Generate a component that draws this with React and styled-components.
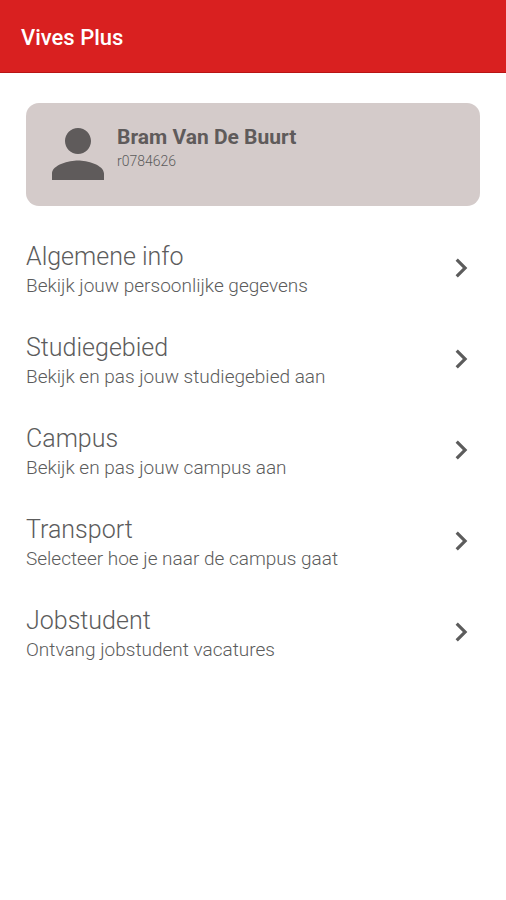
import styled, { createGlobalStyle } from "styled-components";
import { MdPerson, MdChevronRight } from "react-icons/md";

const GlobalStyle = createGlobalStyle`
  * {
    box-sizing: border-box;
  }

  body {
    margin: 0;
    background-color: #ffffff;
    color: #5c5c5c;
    font-family: Roboto, "Liberation Sans", sans-serif;
  }
`;

const Page = styled.div`
  min-height: 100vh;
`;

const AppBar = styled.header`
  display: flex;
  align-items: center;
  padding: 24px 21px 20px;
  border-bottom: 1px solid #b81414;
  background-color: #d92020;
`;

const Title = styled.h1`
  margin: 0;
  font-size: 22px;
  line-height: 28px;
  font-weight: 500;
  color: #ffffff;
`;

const Content = styled.main`
  display: flex;
  flex-direction: column;
  gap: 33px;
  padding: 30px 26px;
`;

const ProfileCard = styled.section`
  display: flex;
  align-items: flex-start;
  padding: 12px 13px 13px;
  border-radius: 13px;
  background-color: #d4cbca;
`;

const Avatar = styled(MdPerson)`
  flex: none;
  width: 78px;
  height: 78px;
  color: #5f5b5b;
`;

const ProfileText = styled.div`
  display: flex;
  flex-direction: column;
  padding-top: 8px;
`;

const ProfileName = styled.h2`
  margin: 0;
  font-size: 21px;
  line-height: 28px;
  font-weight: 700;
  color: #5f5b5b;
`;

const ProfileNumber = styled.span`
  font-size: 14px;
  line-height: 20px;
  font-weight: 300;
`;

const Menu = styled.nav`
  display: flex;
  flex-direction: column;
  gap: 33px;
`;

const MenuItem = styled.a`
  display: flex;
  align-items: center;
  justify-content: space-between;
  color: inherit;
  text-decoration: none;
`;

const MenuText = styled.span`
  display: flex;
  flex-direction: column;
  font-weight: 300;
`;

const MenuTitle = styled.span`
  font-size: 25px;
  line-height: 36px;
`;

const MenuDescription = styled.span`
  font-size: 19px;
  line-height: 22px;
`;

const Chevron = styled(MdChevronRight)`
  flex: none;
  width: 38px;
  height: 38px;
`;

const items = [
  {
    id: "info",
    title: "Algemene info",
    description: "Bekijk jouw persoonlijke gegevens",
  },
  {
    id: "studiegebied",
    title: "Studiegebied",
    description: "Bekijk en pas jouw studiegebied aan",
  },
  {
    id: "campus",
    title: "Campus",
    description: "Bekijk en pas jouw campus aan",
  },
  {
    id: "transport",
    title: "Transport",
    description: "Selecteer hoe je naar de campus gaat",
  },
  {
    id: "jobstudent",
    title: "Jobstudent",
    description: "Ontvang jobstudent vacatures",
  },
];

export default function App() {
  return (
    <Page>
      <GlobalStyle />
      <AppBar>
        <Title>Vives Plus</Title>
      </AppBar>
      <Content>
        <ProfileCard>
          <Avatar />
          <ProfileText>
            <ProfileName>Bram Van De Buurt</ProfileName>
            <ProfileNumber>r0784626</ProfileNumber>
          </ProfileText>
        </ProfileCard>
        <Menu>
          {items.map((item) => (
            <MenuItem key={item.id} href={`#${item.id}`}>
              <MenuText>
                <MenuTitle>{item.title}</MenuTitle>
                <MenuDescription>{item.description}</MenuDescription>
              </MenuText>
              <Chevron />
            </MenuItem>
          ))}
        </Menu>
      </Content>
    </Page>
  );
}
